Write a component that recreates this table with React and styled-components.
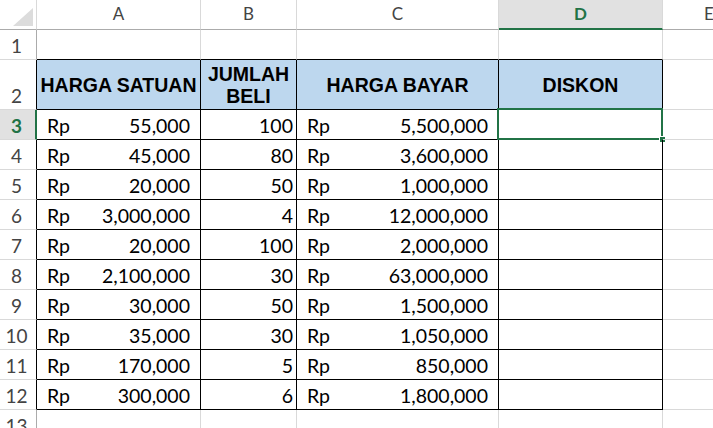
import React from 'react'
import styled, { createGlobalStyle, css } from 'styled-components'

const GlobalStyle = createGlobalStyle`
    html, body {
        margin: 0;
        padding: 0;
        background: #ffffff;
    }
`

const GREEN = '#217346'
const GRID = '#d9d9d9'
const HEAD_LINE = '#ababab'

const rows = [
    [55000, 100, 5500000],
    [45000, 80, 3600000],
    [20000, 50, 1000000],
    [3000000, 4, 12000000],
    [20000, 100, 2000000],
    [2100000, 30, 63000000],
    [30000, 50, 1500000],
    [35000, 30, 1050000],
    [170000, 5, 850000],
    [300000, 6, 1800000],
]

const fmt = (n) => n.toLocaleString('en-US')

function App() {
    return (
        <>
            <GlobalStyle />
            <Window>
                <Sheet>
                    {/* kolom header */}
                    <Corner>
                        <svg width="36" height="29" viewBox="0 0 36 29">
                            <polygon points="33,8 33,26 13,26" fill="#dcdcdc" />
                        </svg>
                    </Corner>
                    <ColHead>A</ColHead>
                    <ColHead>B</ColHead>
                    <ColHead>C</ColHead>
                    <ColHead $selected>D</ColHead>
                    <ColHead $last>E</ColHead>

                    {/* baris 1 kosong */}
                    <RowHead>1</RowHead>
                    <Cell $above />
                    <Cell $above />
                    <Cell $above />
                    <Cell $above />
                    <Cell />

                    {/* baris 2 judul */}
                    <RowHead $edge>2</RowHead>
                    <HeadCell>HARGA SATUAN</HeadCell>
                    <HeadCell>JUMLAH<br />BELI</HeadCell>
                    <HeadCell>HARGA BAYAR</HeadCell>
                    <HeadCell>DISKON</HeadCell>
                    <Cell />

                    {rows.map(([harga, jumlah, bayar], i) => {
                        const selected = i === 0
                        return (
                            <React.Fragment key={i}>
                                <RowHead $edge $selected={selected}>{i + 3}</RowHead>
                                <Cell $table>
                                    <span>Rp</span>
                                    <span>{fmt(harga)}</span>
                                </Cell>
                                <Cell $table $right>
                                    <span>{jumlah}</span>
                                </Cell>
                                <Cell $table>
                                    <span>Rp</span>
                                    <span>{fmt(bayar)}</span>
                                </Cell>
                                <Cell $table>
                                    {selected && <Selection><Handle /></Selection>}
                                </Cell>
                                <Cell />
                            </React.Fragment>
                        )
                    })}

                    <RowHead>13</RowHead>
                    <Cell />
                    <Cell />
                    <Cell />
                    <Cell />
                    <Cell />
                </Sheet>
            </Window>
        </>
    )
}

export default App

const Window = styled.div`
    width: 713px;
    height: 428px;
    overflow: hidden;
    background: #ffffff;
`

const Sheet = styled.div`
    display: grid;
    grid-template-columns: 37px 164px 96px 202px 164px 120px;
    grid-template-rows: 30px 30px 50px repeat(10, 30px) 30px;
    font-family: Lato, "Open Sans", sans-serif;
    color: #000000;
`

const Corner = styled.div`
    box-sizing: border-box;
    border-right: 1px solid ${GRID};
    border-bottom: 1px solid ${HEAD_LINE};
    background: #ffffff;
    display: flex;
    svg {
        display: block;
    }
`

const ColHead = styled.div`
    box-sizing: border-box;
    display: flex;
    align-items: center;
    justify-content: center;
    padding-bottom: 2px;
    font-size: 17px;
    color: #444444;
    border-right: 1px solid ${GRID};
    border-bottom: 1px solid ${HEAD_LINE};
    background: #ffffff;
    ${(p) => p.$last && css`
        justify-content: flex-start;
        padding-left: 41px;
    `}
    ${(p) => p.$selected && css`
        background: #e1e1e1;
        color: ${GREEN};
        font-weight: 700;
        border-bottom: 2px solid ${GREEN};
        padding-bottom: 1px;
    `}
`

const RowHead = styled.div`
    box-sizing: border-box;
    display: flex;
    align-items: flex-end;
    justify-content: center;
    padding-bottom: 3px;
    padding-right: 3px;
    font-size: 19px;
    line-height: 20px;
    color: #444444;
    background: #ffffff;
    border-bottom: 1px solid ${GRID};
    border-right: 1px solid ${(p) => (p.$edge ? '#000000' : HEAD_LINE)};
    ${(p) => p.$selected && css`
        background: #e1e1e1;
        color: ${GREEN};
        font-weight: 700;
        border-right: 2px solid ${GREEN};
        padding-right: 2px;
    `}
`

const Cell = styled.div`
    box-sizing: border-box;
    position: relative;
    display: flex;
    align-items: flex-end;
    justify-content: ${(p) => (p.$right ? 'flex-end' : 'space-between')};
    padding: 0 ${(p) => (p.$right ? '3px' : '10px')} 3px 10px;
    font-size: 19.5px;
    line-height: 20px;
    border-right: 1px solid ${(p) => (p.$table ? '#000000' : GRID)};
    border-bottom: 1px solid ${(p) => (p.$table || p.$above ? '#000000' : GRID)};
`

const HeadCell = styled.div`
    box-sizing: border-box;
    display: flex;
    align-items: center;
    justify-content: center;
    text-align: center;
    background: #bdd7ee;
    font-family: "Liberation Sans", Arial, sans-serif;
    font-weight: 700;
    font-size: 19.5px;
    line-height: 22px;
    border-right: 1px solid #000000;
    border-bottom: 1px solid #000000;
`

const Selection = styled.div`
    position: absolute;
    left: -2px;
    top: -2px;
    right: -1px;
    bottom: -1px;
    border: 2px solid ${GREEN};
    pointer-events: none;
`

const Handle = styled.div`
    position: absolute;
    right: -5px;
    bottom: -5px;
    width: 5px;
    height: 5px;
    background: ${GREEN};
    border: 1px solid #ffffff;
`
